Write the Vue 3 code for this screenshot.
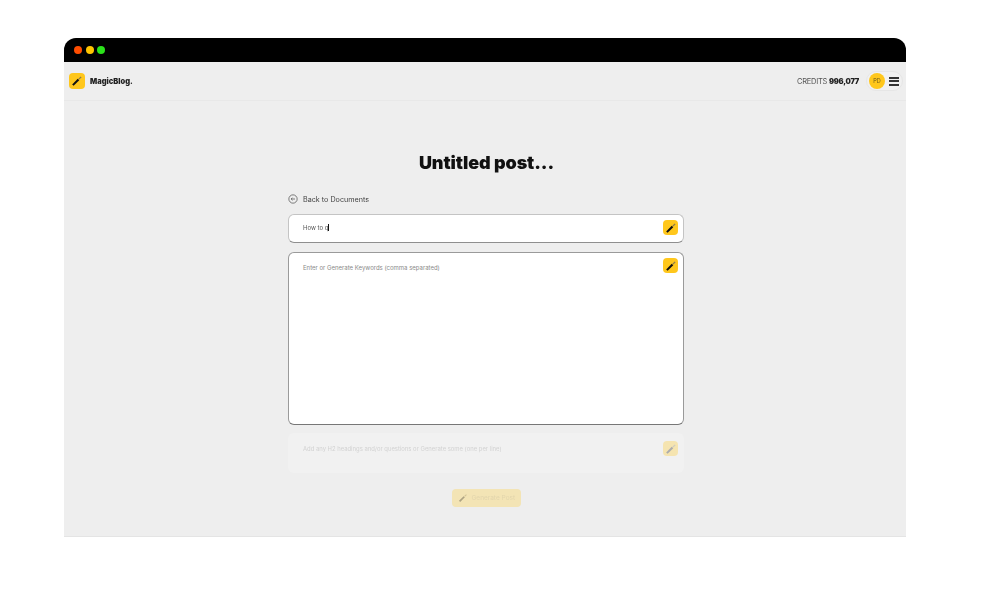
<template>
  <div class="page">
    <div class="window">
      <div class="titlebar">
        <span class="dot red"></span>
        <span class="dot yellow"></span>
        <span class="dot green"></span>
      </div>

      <header class="nav">
        <div class="brand">
          <span class="wand-btn logo"><svg viewBox="0 0 16 16"><path d="M2.5 13.5 10 6" class="shaft" /><path d="M10.5 5.5 13.5 2.5" class="tip" /></svg></span>
          <span class="brand-name">MagicBlog.</span>
        </div>
        <div class="account">
          <span class="credits">CREDITS <b>996,077</b></span>
          <div class="user-pill">
            <span class="avatar">PD</span>
            <span class="burger"><i></i><i></i><i></i></span>
          </div>
        </div>
      </header>

      <main class="content">
        <h1>Untitled post...</h1>
        <div class="form">
          <a class="back">
            <svg viewBox="0 0 12 12" class="back-icon">
              <circle cx="6" cy="6" r="5" />
              <path d="M8.4 6H3.8M5.4 4.4 3.8 6l1.6 1.6" />
            </svg>
            Back to Documents
          </a>

          <div class="field title-field">
            <span class="typed">How to q<span class="caret"></span></span>
            <span class="wand-btn"><svg viewBox="0 0 16 16"><path d="M2.5 13.5 10 6" class="shaft" /><path d="M10.5 5.5 13.5 2.5" class="tip" /></svg></span>
          </div>

          <div class="field keywords-field">
            <span class="hint">Enter or Generate Keywords (comma separated)</span>
            <span class="wand-btn"><svg viewBox="0 0 16 16"><path d="M2.5 13.5 10 6" class="shaft" /><path d="M10.5 5.5 13.5 2.5" class="tip" /></svg></span>
          </div>

          <div class="field headings-field">
            <span class="hint">Add any H2 headings and/or questions or Generate some (one per line)</span>
            <span class="wand-btn"><svg viewBox="0 0 16 16"><path d="M2.5 13.5 10 6" class="shaft" /><path d="M10.5 5.5 13.5 2.5" class="tip" /></svg></span>
          </div>

          <button class="generate" disabled>
            <svg viewBox="0 0 16 16"><path d="M2.5 13.5 10 6" class="shaft" /><path d="M10.5 5.5 13.5 2.5" class="tip" /></svg>
            Generate Post
          </button>
        </div>
      </main>
    </div>
  </div>
</template>

<script setup>
</script>

<style>
html, body {
  background: #fff;
}
</style>

<style scoped>
.page {
  width: 1000px;
  height: 593px;
  padding: 38px 94px 0 64px;
  box-sizing: border-box;
  font-family: Inter, "Liberation Sans", sans-serif;
  overflow: hidden;
}

.window {
  height: 499px;
  background: #eeeeee;
  border-radius: 12px 12px 0 0;
  border-bottom: 1px solid #e4e4e4;
  box-sizing: border-box;
  overflow: hidden;
  filter: blur(0.5px);
}

.titlebar {
  height: 24px;
  background: #000;
  display: flex;
  align-items: center;
  gap: 3.5px;
  padding: 0 10px;
  box-sizing: border-box;
}

.dot {
  width: 8px;
  height: 8px;
  border-radius: 50%;
}
.red { background: #ff4d00; }
.yellow { background: #ffc400; }
.green { background: #2be21a; }

.nav {
  height: 39px;
  display: flex;
  justify-content: space-between;
  align-items: center;
  padding: 0 3px 0 5px;
  border-bottom: 1px solid #e8e8e8;
  box-sizing: border-box;
}

.brand {
  display: flex;
  align-items: center;
  gap: 5px;
}

.brand-name {
  font-size: 7.5px;
  font-weight: 900;
  color: #222;
}

.account {
  display: flex;
  align-items: center;
  gap: 7px;
}

.credits {
  font-size: 7.5px;
  letter-spacing: -0.25px;
  color: #555;
}
.credits b {
  font-weight: 900;
  color: #222;
}

.user-pill {
  display: flex;
  align-items: center;
  gap: 4px;
  height: 20px;
  padding: 0 3px 0 2px;
  border-radius: 10px;
  background: #f1f1f1;
  border: 1px solid #e6e6e6;
  box-sizing: border-box;
}

.avatar {
  width: 16px;
  height: 16px;
  border-radius: 50%;
  background: #ffc71c;
  color: #6b5a1a;
  font-size: 5.5px;
  display: flex;
  align-items: center;
  justify-content: center;
}

.burger {
  display: flex;
  flex-direction: column;
  gap: 1.5px;
  width: 10px;
}
.burger i {
  height: 2px;
  background: #333;
}

.wand-btn {
  width: 15px;
  height: 15px;
  border-radius: 4px;
  background: #ffc71c;
  display: flex;
  align-items: center;
  justify-content: center;
  flex: none;
}
.wand-btn svg {
  width: 12px;
  height: 12px;
}
.logo {
  width: 16px;
  height: 16px;
}

.shaft {
  stroke: #111;
  stroke-width: 2.8;
  fill: none;
}
.tip {
  stroke: #8a7a50;
  stroke-width: 1.8;
  fill: none;
}

.content {
  display: flex;
  flex-direction: column;
  align-items: center;
}

h1 {
  margin: 50px 0 0 3px;
  height: 24px;
  line-height: 24px;
  font-size: 18px;
  font-weight: 900;
  letter-spacing: -0.1px;
  color: #111;
}

.form {
  width: 396px;
  margin: 17px 0 0 2px;
  display: flex;
  flex-direction: column;
}

.back {
  display: flex;
  align-items: center;
  gap: 5px;
  height: 14px;
  font-size: 7.2px;
  color: #444;
}
.back-icon {
  width: 10px;
  height: 10px;
  fill: none;
  stroke: #444;
  stroke-width: 0.8;
}

.field {
  box-sizing: border-box;
  display: flex;
  justify-content: space-between;
  padding: 5px 5px 0 14px;
  background: #fff;
  border-radius: 6px;
  border: 1px solid #c4c4c4;
  border-bottom: 1.5px solid #8f8f8f;
  font-size: 6px;
}

.title-field {
  height: 29px;
  margin-top: 8px;
  align-items: center;
  padding-top: 0;
  padding-bottom: 2px;
}

.keywords-field {
  height: 173px;
  margin-top: 9px;
  border-color: #9a9a9a;
  border-bottom-color: #777;
}
.keywords-field .hint {
  margin-top: 6px;
}

.headings-field {
  height: 40px;
  margin-top: 8px;
  background: #f1f1f1;
  border: none;
  padding: 8px 6px 0 15px;
}
.headings-field .hint {
  margin-top: 4px;
  font-size: 5.9px;
  color: #d2d2d2;
}
.headings-field .wand-btn {
  opacity: 0.3;
}

.typed {
  color: #555;
}
.caret {
  display: inline-block;
  width: 0.5px;
  height: 7px;
  background: #111;
  vertical-align: -1px;
}

.hint {
  color: #8a8a8a;
}

.generate {
  align-self: center;
  width: 69px;
  height: 18px;
  margin-top: 16px;
  padding: 0 0 0 6px;
  border: none;
  border-radius: 4px;
  background: #f3e4b5;
  color: #e2d5ac;
  font-family: inherit;
  font-size: 6.5px;
  display: flex;
  align-items: center;
  gap: 4px;
  white-space: nowrap;
}
.generate svg {
  width: 10px;
  height: 10px;
  flex: none;
  opacity: 0.3;
}
</style>
